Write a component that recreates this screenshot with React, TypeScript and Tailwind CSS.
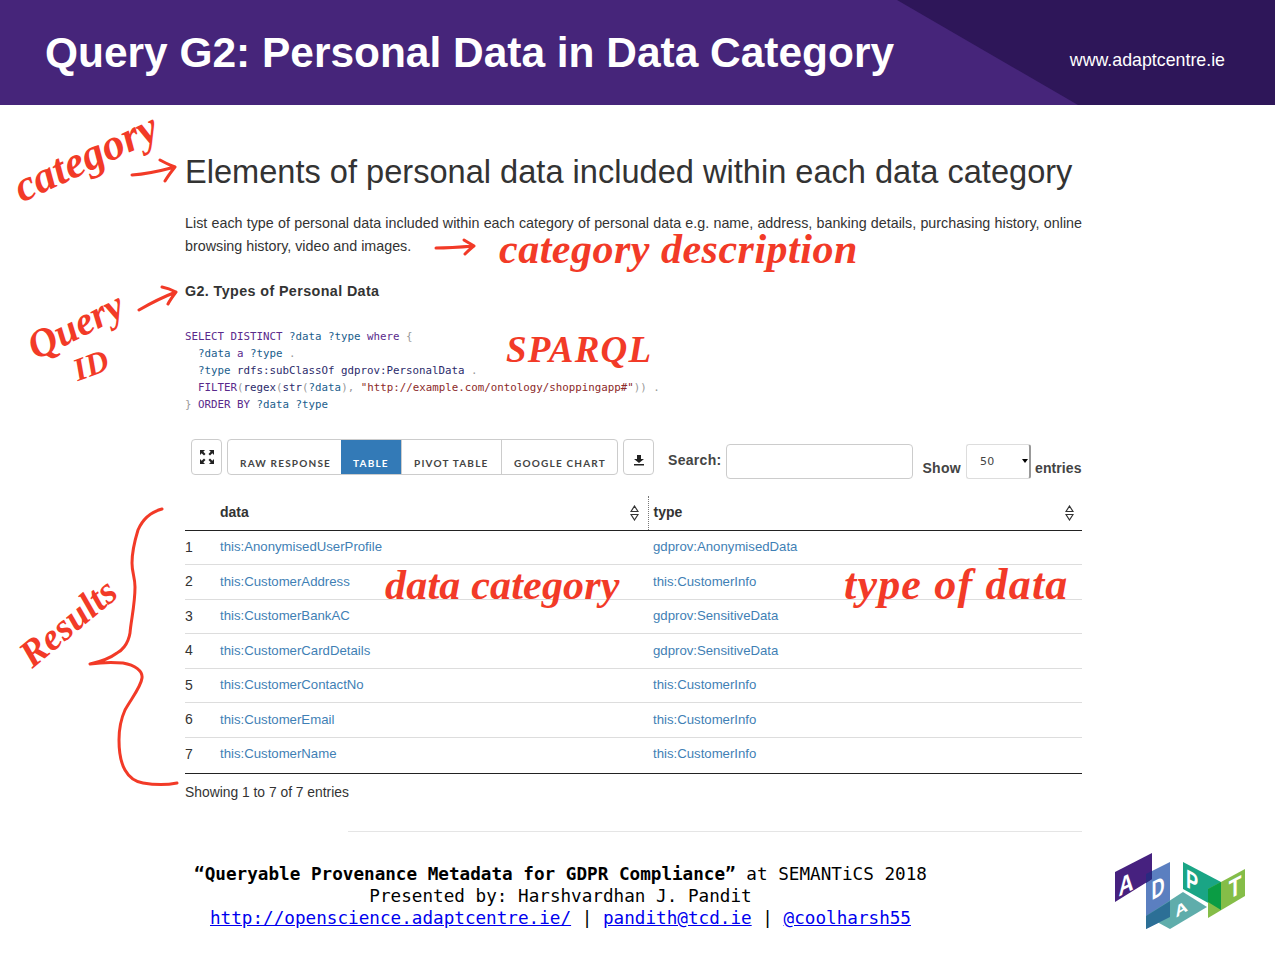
const rows = [
  ["this:AnonymisedUserProfile", "gdprov:AnonymisedData"],
  ["this:CustomerAddress", "this:CustomerInfo"],
  ["this:CustomerBankAC", "gdprov:SensitiveData"],
  ["this:CustomerCardDetails", "gdprov:SensitiveData"],
  ["this:CustomerContactNo", "this:CustomerInfo"],
  ["this:CustomerEmail", "this:CustomerInfo"],
  ["this:CustomerName", "this:CustomerInfo"],
];

const tabs = [
  { label: "RAW RESPONSE", width: "w-[113px]" },
  { label: "TABLE", width: "w-[60px]" },
  { label: "PIVOT TABLE", width: "w-[100px]" },
  { label: "GOOGLE CHART", width: "w-[116px]" },
];

function SortIcon() {
  return (
    <svg width="9" height="16" viewBox="0 0 9 16" fill="none" stroke="#333" strokeWidth="1.2">
      <path d="M4.5 1 L8 6.5 H1 Z" />
      <path d="M4.5 15 L8 9.5 H1 Z" />
    </svg>
  );
}

function AdaptLogo() {
  const letter = { fill: "#fff", fontWeight: 700, fontFamily: "'Liberation Sans', sans-serif", textAnchor: "middle" as const };
  return (
    <svg width="132" height="80" viewBox="0 0 132 80" className="shrink-0">
      <polygon points="31,22 55,10 55,65 31,77" fill="#5b7fc0" />
      <polygon points="0,20 37,1 37,27 0,50" fill="#46217f" />
      <polygon points="31,22 37,19 37,27 31,31" fill="#2a2a80" />
      <polygon points="31,64 68,40 92,55 55,77" fill="#5fadab" />
      <polygon points="31,64 55,49 55,65 31,77" fill="#2c6f96" />
      <polygon points="68,10 106,30 106,58 68,37" fill="#1aa585" />
      <polygon points="93,37 130,17 130,44 93,66" fill="#85bd48" />
      <polygon points="93,37 106,30 106,58 93,50" fill="#0b9c44" />
      <text transform="translate(11 41) skewY(-27) scale(0.8 1)" fontSize="26" {...letter}>A</text>
      <text transform="translate(43 45) skewY(-27) scale(0.7 1)" fontSize="26" {...letter}>D</text>
      <text transform="translate(77 38) skewY(28) scale(0.7 1)" fontSize="26" {...letter}>P</text>
      <text transform="translate(67 62) rotate(-32) skewX(-20) scale(1 0.7)" fontSize="20" {...letter}>A</text>
      <text transform="translate(120 44) skewY(-28) scale(0.8 1)" fontSize="26" {...letter}>T</text>
    </svg>
  );
}

function Arrow({ className, d, w, h }: { className: string; d: string; w: number; h: number }) {
  return (
    <svg
      width={w}
      height={h}
      viewBox={`0 0 ${w} ${h}`}
      fill="none"
      stroke="#f23a27"
      strokeWidth="3"
      strokeLinecap="round"
      strokeLinejoin="round"
      className={className}
    >
      <path d={d} />
    </svg>
  );
}

const hand = "absolute text-[#f23a27] font-['Liberation_Serif',serif] italic whitespace-nowrap origin-left";

function Annotations() {
  return (
    <>
      <span className={`${hand} left-[16px] top-[168px] text-[44px] leading-none font-bold -rotate-[25deg]`}>category</span>
      <Arrow className="absolute left-[130px] top-[158px]" w={48} h={26} d="M2 17 C18 16 30 13 45 9 M30 2 C35 5 40 7 45 9 C41 14 38 18 35 23" />
      <Arrow className="absolute left-[434px] top-[238px]" w={44} h={20} d="M2 10 C15 10 28 9 40 8 M30 2 C33 4 37 6 40 8 C37 10 34 13 31 16" />
      <span className={`${hand} left-[499px] top-[228px] text-[42px] leading-none font-bold tracking-[0.5px]`}>category description</span>
      <Arrow className="absolute left-[137px] top-[285px]" w={42} h={28} d="M2 25 C14 18 26 12 39 7 M25 2 C30 3 35 5 39 7 C36 11 33 15 31 19" />
      <span className={`${hand} left-[30px] top-[329px] text-[40px] leading-none font-bold -rotate-[27deg]`}>Query</span>
      <span className={`${hand} left-[74px] top-[355px] text-[32px] leading-none font-bold -rotate-[20deg]`}>ID</span>
      <span className={`${hand} left-[506px] top-[331px] text-[37px] leading-none font-bold tracking-[1.2px]`}>SPARQL</span>
      <span className={`${hand} left-[24px] top-[640px] text-[38px] leading-none font-bold -rotate-[40deg]`}>Results</span>
      <Arrow
        className="absolute left-[85px] top-[505px]"
        w={95}
        h={285}
        d="M77 4 C62 8 56 18 53 25 C49 38 47 48 47 58 C47 68 50 72 50 82 C50 100 46 115 45 128 C43 140 36 146 32 148 C24 154 14 157 5 159 C18 157 28 157 38 158 C50 160 58 166 57 173 C56 182 46 194 40 205 C35 216 34 226 34 235 C34 248 36 258 40 265 C45 274 52 277 58 278 C70 280 82 280 92 278"
      />
      <span className={`${hand} left-[385px] top-[564px] text-[42px] leading-none font-bold tracking-[0.2px]`}>data category</span>
      <span className={`${hand} left-[844px] top-[563px] text-[44px] leading-none font-bold tracking-[1.2px]`}>type of data</span>
    </>
  );
}

export default function App() {
  return (
    <div className="relative w-[1275px] h-[957px] bg-white overflow-hidden font-['Liberation_Sans',sans-serif] text-[#333]">
      <header className="relative h-[105px] bg-[#46257a] flex items-start justify-between pl-[45px] pr-[50px]">
        <div className="absolute inset-0 bg-[#2e1659] [clip-path:polygon(897px_0,1275px_0,1275px_105px,1078px_105px)]" />
        <h1 className="relative mt-[26px] text-[42.45px] leading-[54px] font-bold text-white whitespace-nowrap">Query G2: Personal Data in Data Category</h1>
        <span className="relative mt-[49px] text-[17.8px] leading-[22px] text-white">www.adaptcentre.ie</span>
      </header>

      <main className="ml-[185px] w-[897px]">
        <h2 className="mt-[48px] text-[32.6px] leading-[38px] text-[#333] whitespace-nowrap">Elements of personal data included within each data category</h2>
        <p className="mt-[21px] text-[14.3px] leading-[23px] text-[#333] text-justify">
          List each type of personal data included within each category of personal data e.g. name, address, banking details, purchasing history, online browsing history, video and images.
        </p>
        <h3 className="mt-[23px] text-[14.3px] leading-[20px] font-bold tracking-[0.4px]">G2. Types of Personal Data</h3>
        <pre className="mt-[27px] font-['DejaVu_Sans_Mono',monospace] text-[10.8px] leading-[17px] text-[#5a2a8c]">
          <span>SELECT DISTINCT </span><span className="text-[#1b5e8c]">?data ?type </span><span>where </span><span className="text-[#999]">{"{"}</span>{"\n"}
          {"  "}<span className="text-[#1b5e8c]">?data </span><span>a </span><span className="text-[#1b5e8c]">?type </span><span className="text-[#999]">.</span>{"\n"}
          {"  "}<span className="text-[#1b5e8c]">?type </span><span className="text-[#2b2b6b]">rdfs:subClassOf gdprov:PersonalData </span><span className="text-[#999]">.</span>{"\n"}
          {"  "}<span>FILTER</span><span className="text-[#999]">(</span><span className="text-[#2b2b6b]">regex</span><span className="text-[#999]">(</span><span className="text-[#2b2b6b]">str</span><span className="text-[#999]">(</span><span className="text-[#1b5e8c]">?data</span><span className="text-[#999]">), </span><span className="text-[#8c2a2a]">"http://example.com/ontology/shoppingapp#"</span><span className="text-[#999]">)) .</span>{"\n"}
          <span className="text-[#999]">{"} "}</span><span>ORDER BY </span><span className="text-[#1b5e8c]">?data ?type</span>
        </pre>

        <div className="mt-[26px] ml-[6px] flex items-start h-[41px]">
          <button className="w-[31px] h-[36px] border border-[#ccc] rounded-[4px] flex items-center justify-center">
            <svg width="16" height="16" viewBox="0 0 16 16" fill="#222">
              <path d="M1 1h5L4.3 2.7 6.5 5 5 6.5 2.7 4.3 1 6zM15 1v5l-1.7-1.7L11 6.5 9.5 5l2.2-2.3L10 1zM1 15v-5l1.7 1.7L5 9.5 6.5 11l-2.2 2.3L6 15zM15 15h-5l1.7-1.7L9.5 11 11 9.5l2.3 2.2L15 10z" />
            </svg>
          </button>
          <div className="ml-[5px] flex h-[36px] border border-[#ccc] rounded-[4px] overflow-hidden">
            {tabs.map((t, i) => (
              <div
                key={t.label}
                className={
                  t.width +
                  " flex items-end pb-[4px] pl-[12px] text-[10px] leading-[14px] font-['Lato',sans-serif] font-bold tracking-[1.2px] whitespace-nowrap " +
                  (t.label === "TABLE" ? "bg-[#337ab7] text-white" : "text-[#444]") +
                  (i > 1 ? " border-l border-[#ccc]" : "")
                }
              >
                {t.label}
              </div>
            ))}
          </div>
          <button className="ml-[5px] w-[31px] h-[36px] border border-[#ccc] rounded-[4px] flex items-center justify-center">
            <svg width="12" height="12" viewBox="0 0 12 12" fill="#222" className="mt-[6px]">
              <path d="M4 1h4v4h3L6 9 1 5h3zM1 10h10v1.6H1z" />
            </svg>
          </button>
          <div className="ml-[14px] flex items-start text-[14px] font-bold text-[#444] tracking-[0.3px]">
            <span className="mt-[11px] leading-[20px]">Search:</span>
            <div className="ml-[5px] mt-[5px] w-[187px] h-[35px] border border-[#ccc] rounded-[4px]" />
            <span className="ml-[9px] mt-[19px] leading-[20px]">Show</span>
            <div className="ml-[5px] mt-[5px] w-[65px] h-[35px] border border-[#ddd] rounded-[3px] relative border-r-[2px] border-r-[#999]">
              <span className="absolute left-[13px] top-[10px] text-[11px] leading-[14px] font-normal font-['DejaVu_Sans',sans-serif]">50</span>
              <span className="absolute right-[1px] top-[14px] w-0 h-0 border-x-[3px] border-x-transparent border-t-[4px] border-t-black" />
            </div>
            <span className="ml-[4px] mt-[19px] leading-[20px] font-bold tracking-[0.1px]">entries</span>
          </div>
        </div>

        <table className="mt-[16px] w-[897px] text-[13.2px] table-fixed border-b border-[#222]">
          <thead>
            <tr className="h-[34px] border-b border-[#222] text-[14px]">
              <th className="w-[35px]" />
              <th className="w-[428px] text-left font-bold">
                <div className="flex items-center justify-between pr-[9px]">data <SortIcon /></div>
              </th>
              <th className="text-left font-bold pl-[5px] border-l border-dotted border-[#777]">
                <div className="flex items-center justify-between pr-[8px]">type <SortIcon /></div>
              </th>
            </tr>
          </thead>
          <tbody>
            {rows.map(([data, type], i) => (
              <tr key={i} className="h-[34.5px] border-b border-[#ddd] last:border-b-0 last:h-[36px]">
                <td className={"text-[14px]" + (i === 6 ? " pb-[2px]" : "")}>{i + 1}</td>
                <td className={"text-[#3f7fb5]" + (i === 6 ? " pb-[2px]" : "")}>{data}</td>
                <td className={"pl-[5px] text-[#3f7fb5]" + (i === 6 ? " pb-[2px]" : "")}>{type}</td>
              </tr>
            ))}
          </tbody>
        </table>
        <p className="mt-[8px] text-[13.85px] leading-[20px]">Showing 1 to 7 of 7 entries</p>
      </main>

      <div className="ml-[348px] w-[734px] mt-[29px] border-t border-[#e5e5e5]" />

      <footer className="mt-[31px] flex items-start">
        <div className="w-[1121px] text-center font-['DejaVu_Sans_Mono',monospace] text-[17.65px] leading-[22px] text-black">
          <div><b>“Queryable Provenance Metadata for GDPR Compliance”</b> at SEMANTiCS 2018</div>
          <div>Presented by: Harshvardhan J. Pandit</div>
          <div>
            <a className="text-[#0000ee] underline">http://openscience.adaptcentre.ie/</a> | <a className="text-[#0000ee] underline">pandith@tcd.ie</a> | <a className="text-[#0000ee] underline">@coolharsh55</a>
          </div>
        </div>
        <div className="-mt-[11px] -ml-[6px]">
          <AdaptLogo />
        </div>
      </footer>

      <Annotations />
    </div>
  );
}
